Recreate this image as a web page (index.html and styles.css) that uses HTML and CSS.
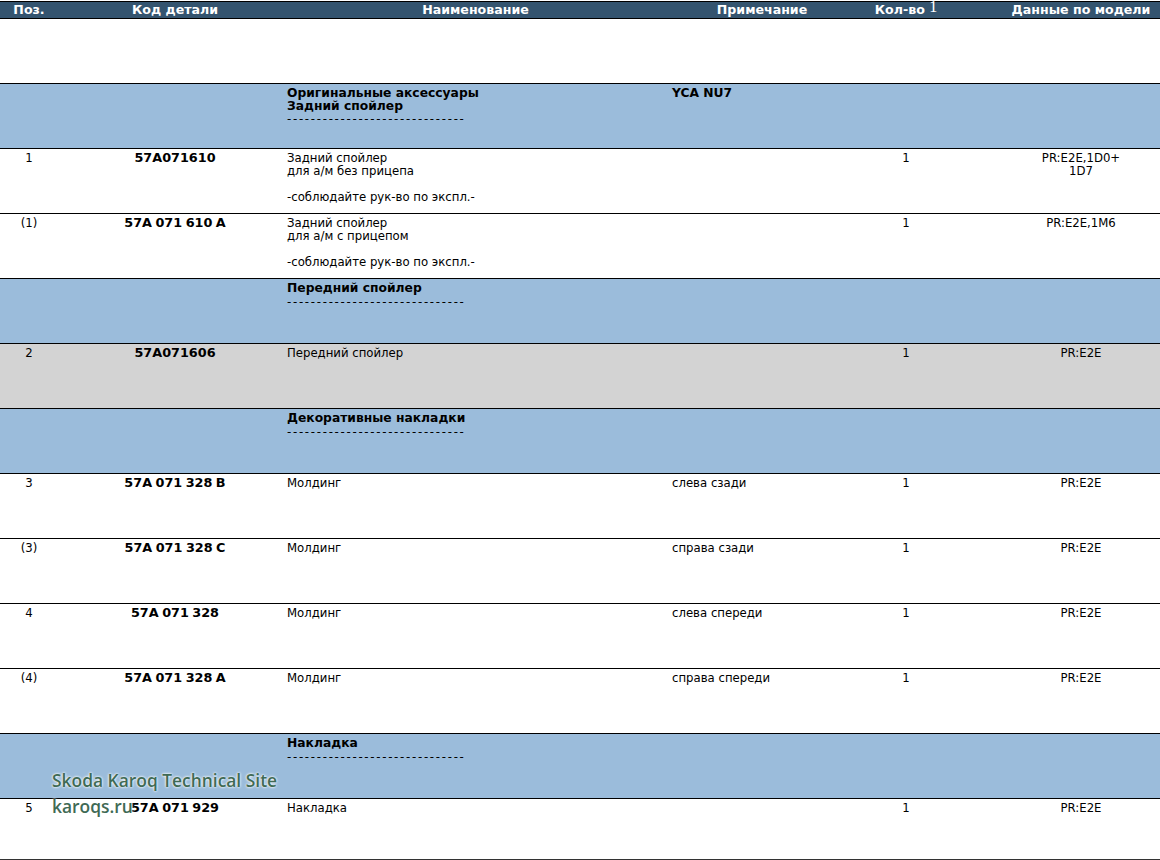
FILE: index.html
```html
<!DOCTYPE html>
<html lang="ru">
<head>
<meta charset="utf-8">
<title>Оригинальные аксессуары</title>
<link rel="stylesheet" href="styles.css">
</head>
<body>
<div class="page">
  <div class="row head">
    <div class="c pos">Поз.</div>
    <div class="c code">Код детали</div>
    <div class="c hname">Наименование</div>
    <div class="c hnote">Примечание</div>
    <div class="c qty">Кол-во <sup class="fn">1</sup></div>
    <div class="c model">Данные по модели</div>
  </div>
  <div class="spacer"></div>

  <div class="row sec">
    <div class="c pos"></div>
    <div class="c code"></div>
    <div class="c name"><b>Оригинальные аксессуары<br>Задний спойлер</b><span class="dash">------------------------------</span></div>
    <div class="c note"><b>YCA NU7</b></div>
    <div class="c qty"></div>
    <div class="c model"></div>
  </div>

  <div class="row">
    <div class="c pos">1</div>
    <div class="c code"><b>57A071610</b></div>
    <div class="c name">Задний спойлер<br>для а/м без прицепа<p class="hint">-соблюдайте рук-во по экспл.-</p></div>
    <div class="c note"></div>
    <div class="c qty">1</div>
    <div class="c model">PR:E2E,1D0+<br>1D7</div>
  </div>

  <div class="row">
    <div class="c pos">(1)</div>
    <div class="c code"><b>57A 071 610 A</b></div>
    <div class="c name">Задний спойлер<br>для а/м с прицепом<p class="hint">-соблюдайте рук-во по экспл.-</p></div>
    <div class="c note"></div>
    <div class="c qty">1</div>
    <div class="c model">PR:E2E,1M6</div>
  </div>

  <div class="row sec">
    <div class="c pos"></div>
    <div class="c code"></div>
    <div class="c name"><b>Передний спойлер</b><span class="dash">------------------------------</span></div>
    <div class="c note"></div>
    <div class="c qty"></div>
    <div class="c model"></div>
  </div>

  <div class="row alt">
    <div class="c pos">2</div>
    <div class="c code"><b>57A071606</b></div>
    <div class="c name">Передний спойлер</div>
    <div class="c note"></div>
    <div class="c qty">1</div>
    <div class="c model">PR:E2E</div>
  </div>

  <div class="row sec">
    <div class="c pos"></div>
    <div class="c code"></div>
    <div class="c name"><b>Декоративные накладки</b><span class="dash">------------------------------</span></div>
    <div class="c note"></div>
    <div class="c qty"></div>
    <div class="c model"></div>
  </div>

  <div class="row">
    <div class="c pos">3</div>
    <div class="c code"><b>57A 071 328 B</b></div>
    <div class="c name">Молдинг</div>
    <div class="c note">слева сзади</div>
    <div class="c qty">1</div>
    <div class="c model">PR:E2E</div>
  </div>

  <div class="row">
    <div class="c pos">(3)</div>
    <div class="c code"><b>57A 071 328 C</b></div>
    <div class="c name">Молдинг</div>
    <div class="c note">справа сзади</div>
    <div class="c qty">1</div>
    <div class="c model">PR:E2E</div>
  </div>

  <div class="row">
    <div class="c pos">4</div>
    <div class="c code"><b>57A 071 328</b></div>
    <div class="c name">Молдинг</div>
    <div class="c note">слева спереди</div>
    <div class="c qty">1</div>
    <div class="c model">PR:E2E</div>
  </div>

  <div class="row">
    <div class="c pos">(4)</div>
    <div class="c code"><b>57A 071 328 A</b></div>
    <div class="c name">Молдинг</div>
    <div class="c note">справа спереди</div>
    <div class="c qty">1</div>
    <div class="c model">PR:E2E</div>
  </div>

  <div class="row sec">
    <div class="c pos"></div>
    <div class="c code"></div>
    <div class="c name"><b>Накладка</b><span class="dash">------------------------------</span></div>
    <div class="c note"></div>
    <div class="c qty"></div>
    <div class="c model"></div>
  </div>

  <div class="row last">
    <div class="c pos">5</div>
    <div class="c code"><b>57A 071 929</b></div>
    <div class="c name">Накладка</div>
    <div class="c note"></div>
    <div class="c qty">1</div>
    <div class="c model">PR:E2E</div>
  </div>

  <div class="watermark">Skoda Karoq Technical Site<br>karoqs.ru</div>
</div>
</body>
</html>
```
FILE: styles.css
```css
html, body {
  margin: 0;
  padding: 0;
  background: #ffffff;
}
body {
  font-family: "DejaVu Sans Condensed", "DejaVu Sans", sans-serif;
  font-size: 13px;
  color: #000;
}
.page {
  position: relative;
  width: 1160px;
  padding-top: 1px;
}
.row {
  display: grid;
  grid-template-columns: 58px 225px 385px 188px 100px 204px;
  height: 64px;
  border-top: 1px solid #000;
  line-height: 13px;
}
.row.last {
  height: 60px;
  border-bottom: 1px solid #333;
}
.c {
  padding-top: 2px;
  white-space: nowrap;
}
.pos { text-align: center; }
.code { text-align: center; padding-left: 9px; }
.code b {
  font-family: "DejaVu Sans", sans-serif;
  font-weight: bold;
  font-size: 12.8px;
  word-spacing: -1px;
}
.name, .note { padding-left: 4px; }
.qty { text-align: center; }
.model { text-align: center; padding-left: 46px; }
.hint { margin: 13px 0 0; }
.sec { background: #9bbcdb; }
.sec .c { line-height: 12.5px; padding-top: 3px; }
.sec b {
  font-family: "DejaVu Sans", sans-serif;
  font-weight: bold;
  font-size: 12.3px;
}
.dash {
  display: block;
  letter-spacing: 1.73px;
  line-height: 12px;
  margin-top: 1px;
}
.alt { background: #d3d3d3; }

.head {
  height: 16px;
  background: #34546f;
  border-bottom: 1px solid #000;
  color: #fff;
  font-family: "DejaVu Sans", sans-serif;
  font-weight: bold;
  font-size: 12.6px;
  line-height: 16px;
}
.head .c { padding-top: 0; }
.head .hname { text-align: center; }
.head .hnote { text-align: center; }
.head .qty { text-align: center; }
.fn {
  font-family: "Liberation Serif", serif;
  font-weight: normal;
  font-size: 16px;
  position: relative;
  top: -3px;
  vertical-align: top;
  line-height: 1;
}
.spacer { height: 64px; }

.watermark {
  position: absolute;
  left: 52px;
  top: 767px;
  font-family: "Open Sans", sans-serif;
  font-weight: 600;
  font-size: 17.4px;
  line-height: 26px;
  color: #3f6a55;
  text-shadow: 0 0 3px #fff, 0 0 2px #fff;
  pointer-events: none;
}
```
